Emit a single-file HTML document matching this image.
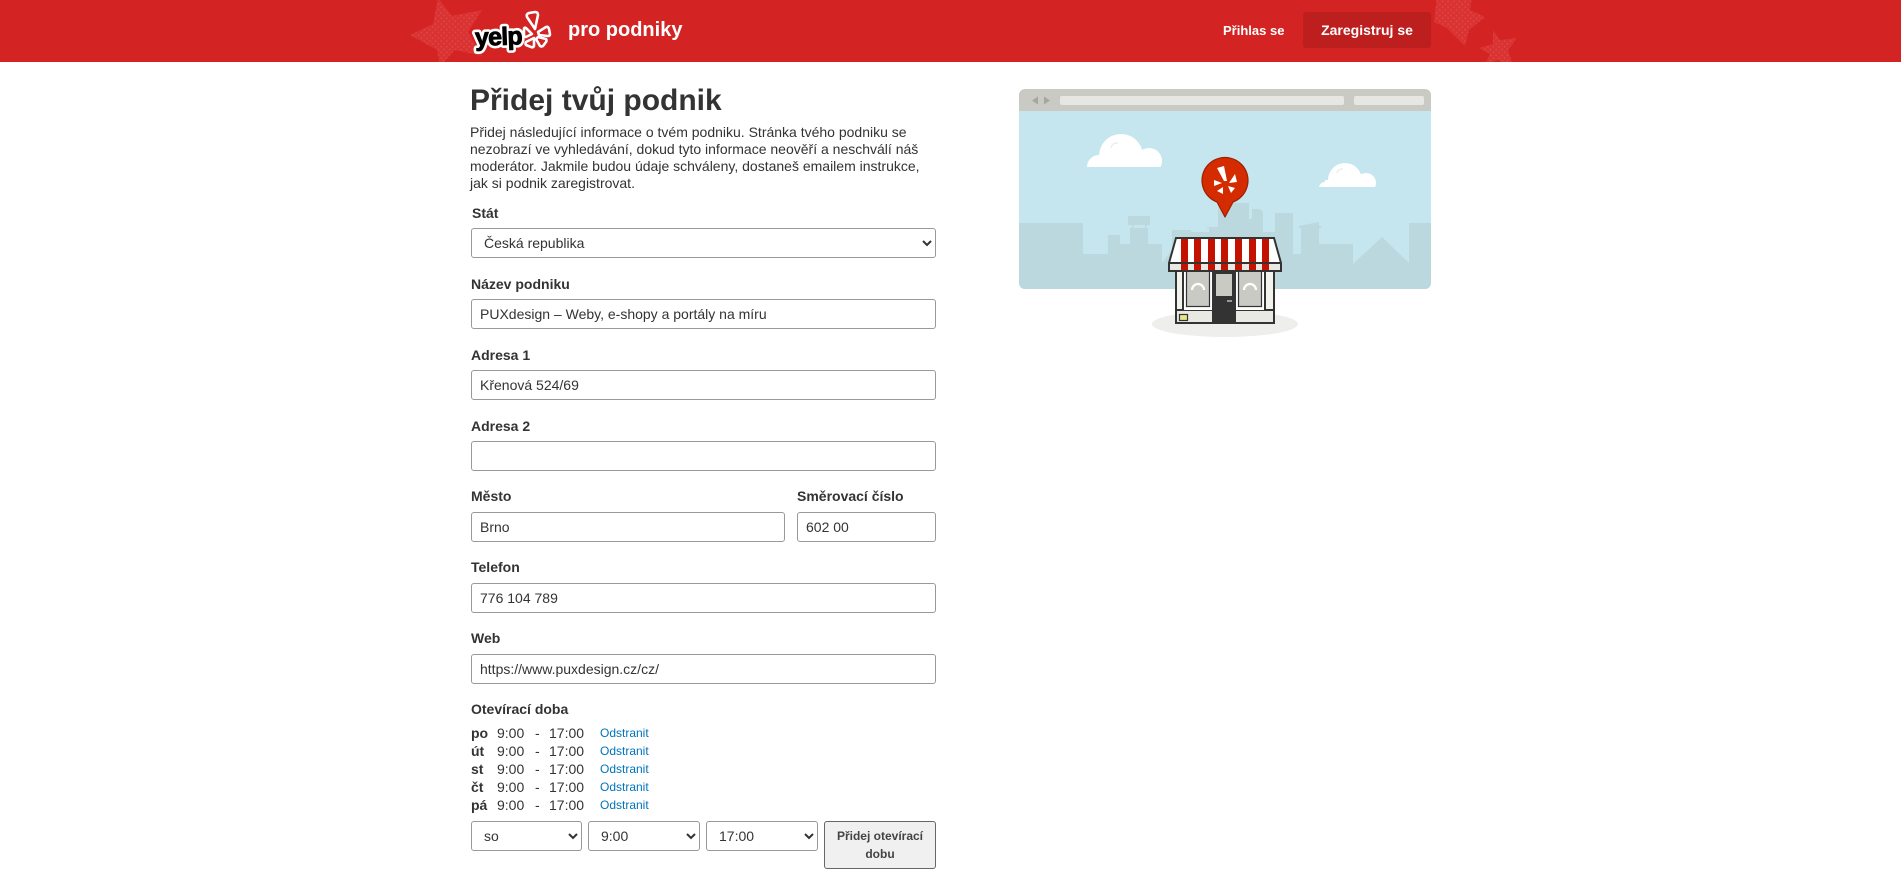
<!DOCTYPE html>
<html lang="cs">
<head>
<meta charset="utf-8">
<title>Přidej tvůj podnik</title>
<style>
html,body{margin:0;padding:0;background:#fff;width:1901px;height:871px;overflow:hidden}
body{font-family:"Liberation Sans",Arial,sans-serif;color:#333;font-size:14px;position:relative}
.abs{position:absolute}
.hdr{position:absolute;left:0;top:0;width:1901px;height:62px;background:#d32323;overflow:hidden}
label{position:absolute;left:471px;font-size:14px;line-height:18px;font-weight:bold;color:#333;white-space:nowrap}
input,select{position:absolute;box-sizing:border-box;height:30px;border:1px solid #999;border-radius:3px;background:#fff;font-family:"Liberation Sans",Arial,sans-serif;font-size:14px;color:#333;padding:0 8px;margin:0}
select{padding:0 8px}
.row{position:absolute;left:471px;height:18px;line-height:18px;font-size:14px;white-space:nowrap}
.row b{position:absolute;left:0;top:0}
.row span{position:absolute;top:0}
.row a{position:absolute;left:129px;top:0;font-size:12px;color:#0073bb;text-decoration:none}
button{position:absolute;box-sizing:border-box;left:824px;top:821px;width:112px;height:48px;background:#f0f0f0;border:1px solid #666;border-radius:3px;font-family:"Liberation Sans",Arial,sans-serif;font-size:12px;line-height:18px;font-weight:bold;color:#444;padding:0 4px;margin:0}
</style>
</head>
<body>
<div class="hdr">
<svg class="abs" style="left:0;top:0" width="1901" height="62" viewBox="0 0 1901 62">
<defs>
<pattern id="d" width="4" height="4" patternUnits="userSpaceOnUse" patternTransform="rotate(45)">
<rect width="4" height="4" fill="#d93232"/>
<rect width="2" height="2" fill="#e04040"/>
</pattern>
</defs>
<polygon points="438,-2 452,16 482,10 468,32 482,56 455,50 440,66 437,50 410,35 433,24" fill="url(#d)"/>
<polygon points="1437,-5 1434,22 1447,28 1465,46 1469,30 1485,17 1470,10 1472,-5" fill="url(#d)"/>
<polygon points="1493,30 1500,40 1517,38 1508,50 1513,66 1497,60 1484,66 1490,54 1479,48 1493,44" fill="url(#d)"/>
<text x="475" y="45" font-family="Liberation Sans,Arial,sans-serif" font-weight="bold" font-size="25" letter-spacing="-0.8" transform="rotate(-2 500 38)" fill="#000" stroke="#fff" stroke-width="6" stroke-linejoin="round" paint-order="stroke">yelp</text>
<text x="475" y="45" font-family="Liberation Sans,Arial,sans-serif" font-weight="bold" font-size="25" letter-spacing="-0.8" transform="rotate(-2 500 38)" fill="#000" stroke="#000" stroke-width="0.9" stroke-linejoin="round" aria-hidden="true">yelp</text>
<g fill="#d32323" stroke="#fff" stroke-width="2.600" stroke-linejoin="round">
<path d="M535,29 L527,17 Q526,14 529,13 L535,12 Q538,12 538,15 Z"/>
<path d="M538,32 L546,27 Q548,26 549,29 L550,34 Q550,36 548,36 L539,35 Z"/>
<path d="M538,37 L546,39 Q547,40 546,42 L543,46 Q541,47 540,46 L536,39 Z"/>
<path d="M534,38 L534,46 Q533,48 531,47 L526,45 Q525,44 526,42 Z"/>
<path d="M532,34 L526,37 Q524,37 524,35 L524,29 Q524,27 526,28 Z"/>
</g>
</svg>
<div class="abs" style="left:568px;top:18px;font-size:20px;line-height:24px;font-weight:bold;color:#fff;white-space:nowrap">pro podniky</div>
<div class="abs" style="left:1223px;top:22px;font-size:13px;line-height:18px;font-weight:bold;color:#fff;white-space:nowrap">Přihlas se</div>
<div class="abs" style="left:1303px;top:12px;width:128px;height:36px;background:#bd1f1f;border-radius:3px;text-align:center;font-size:14px;line-height:36px;font-weight:bold;color:#fff;white-space:nowrap">Zaregistruj se</div>
</div>

<div class="abs" style="left:470px;top:81px;font-size:30px;line-height:40px;font-weight:bold;color:#333;white-space:nowrap">Přidej tvůj podnik</div>
<div class="abs" style="left:470px;top:124px;width:470px;font-size:14px;line-height:17px;color:#333">Přidej následující informace o tvém podniku. Stránka tvého podniku se<br>nezobrazí ve vyhledávání, dokud tyto informace neověří a neschválí náš<br>moderátor. Jakmile budou údaje schváleny, dostaneš emailem instrukce,<br>jak si podnik zaregistrovat.</div>

<label style="top:204px;left:472px">Stát</label>
<select style="left:471px;top:228px;width:465px"><option>Česká republika</option></select>

<label style="top:275px">Název podniku</label>
<input style="left:471px;top:299px;width:465px" value="PUXdesign – Weby, e-shopy a portály na míru">

<label style="top:346px">Adresa 1</label>
<input style="left:471px;top:370px;width:465px" value="Křenová 524/69">

<label style="top:417px">Adresa 2</label>
<input style="left:471px;top:441px;width:465px" value="">

<label style="top:487px">Město</label>
<input style="left:471px;top:512px;width:314px" value="Brno">
<label style="top:487px;left:797px">Směrovací číslo</label>
<input style="left:797px;top:512px;width:139px" value="602 00">

<label style="top:558px">Telefon</label>
<input style="left:471px;top:583px;width:465px" value="776 104 789">

<label style="top:629px">Web</label>
<input style="left:471px;top:654px;width:465px" value="https://www.puxdesign.cz/cz/">

<label style="top:700px">Otevírací doba</label>

<div class="row" style="top:724px"><b>po</b><span style="left:26px">9:00</span><span style="left:64px">-</span><span style="left:78px">17:00</span><a href="#">Odstranit</a></div>
<div class="row" style="top:742px"><b>út</b><span style="left:26px">9:00</span><span style="left:64px">-</span><span style="left:78px">17:00</span><a href="#">Odstranit</a></div>
<div class="row" style="top:760px"><b>st</b><span style="left:26px">9:00</span><span style="left:64px">-</span><span style="left:78px">17:00</span><a href="#">Odstranit</a></div>
<div class="row" style="top:778px"><b>čt</b><span style="left:26px">9:00</span><span style="left:64px">-</span><span style="left:78px">17:00</span><a href="#">Odstranit</a></div>
<div class="row" style="top:796px"><b>pá</b><span style="left:26px">9:00</span><span style="left:64px">-</span><span style="left:78px">17:00</span><a href="#">Odstranit</a></div>

<select style="left:471px;top:821px;width:111px"><option>so</option></select>
<select style="left:588px;top:821px;width:112px"><option>9:00</option></select>
<select style="left:706px;top:821px;width:112px"><option>17:00</option></select>
<button>Přidej otevírací<br>dobu</button>

<svg class="abs" style="left:1010px;top:80px" width="430" height="270" viewBox="1010 80 430 270">
<defs>
<clipPath id="c1"><rect x="1080" y="125" width="90" height="42"/></clipPath>
<clipPath id="c2"><rect x="1315" y="155" width="65" height="32"/></clipPath>
</defs>
<path d="M1019,111 H1431 V283 a6,6 0 0 1 -6,6 H1025 a6,6 0 0 1 -6,-6 Z" fill="#c5e6ef"/>
<path d="M1019,95 a6,6 0 0 1 6,-6 H1425 a6,6 0 0 1 6,6 V111 H1019 Z" fill="#cacac4"/>
<rect x="1060" y="96" width="284" height="9" rx="2" fill="#e6e7e2"/>
<rect x="1354" y="96" width="70" height="9" rx="2" fill="#e6e7e2"/>
<polygon points="1032,100.500 1038,96.500 1038,104.500" fill="#a6a69f"/>
<polygon points="1050,100.500 1044,96.500 1044,104.500" fill="#a6a69f"/>
<g fill="#fff" clip-path="url(#c1)">
<circle cx="1121" cy="156" r="22"/><circle cx="1149" cy="161" r="13"/><circle cx="1099" cy="167" r="12"/><rect x="1099" y="156" width="50" height="11"/>
</g>
<path d="M1111,148 a6,6 0 0 1 7,-5" fill="none" stroke="#dfeff4" stroke-width="1.200"/>
<g fill="#fff" clip-path="url(#c2)">
<circle cx="1345" cy="180" r="17"/><circle cx="1366" cy="183" r="10"/><circle cx="1325" cy="188" r="6"/><rect x="1325" y="180" width="40" height="7"/>
</g>
<path d="M1337,173 a5,5 0 0 1 6,-4" fill="none" stroke="#dfeff4" stroke-width="1.200"/>
<path d="M1019,223 H1083 V254 H1108 V235 H1120 V244 H1130 V228 H1148 V244 H1162 V263 L1172,250 V230 H1191 V232 H1209 V228 H1207 V227 H1218 V203 H1249 V219 H1252 V209 H1258 Q1263,209 1263,214 V232 H1275 V213 H1293 V254 H1301 V228 H1299 V226 L1319,222 V226 H1321 V228 H1319 V244 H1353 V264 L1382,237 L1409,263 V223 H1431 V283 a6,6 0 0 1 -6,6 H1025 a6,6 0 0 1 -6,-6 Z" fill="#bad8de"/>
<rect x="1128" y="216" width="22" height="9" fill="#bad8de"/>
<rect x="1132" y="225" width="1.500" height="3" fill="#bad8de"/>
<rect x="1145" y="225" width="1.500" height="3" fill="#bad8de"/>
<path d="M1225,217 L1217,202 A23,23 0 1 1 1233,202 Z" fill="#d42b00" stroke="#9c2000" stroke-width="1.200" stroke-linejoin="round"/>
<g fill="#fff">
<path d="M1217,168 L1224,166 L1227,181 L1224,181 Z"/>
<path d="M1235,174 L1237,182 L1229,183 Z"/>
<path d="M1228,186 L1235,188 L1231,193 Z"/>
<path d="M1223,187 L1223,194 L1217,191 Z"/>
<path d="M1214,180 L1222,183 L1214,186 Z"/>
</g>
<ellipse cx="1225" cy="324" rx="73" ry="13" fill="#eeeeec"/>
<rect x="1176" y="270" width="98" height="53" fill="#f3f3ee" stroke="#333" stroke-width="2"/>
<rect x="1176" y="310" width="98" height="13" fill="#e9e9e4" stroke="#333" stroke-width="2"/>
<rect x="1184" y="271" width="28" height="39" fill="#fff"/>
<rect x="1236" y="271" width="28" height="39" fill="#fff"/>
<rect x="1182" y="271" width="2" height="39" fill="#333"/>
<rect x="1264" y="271" width="2" height="39" fill="#333"/>
<rect x="1186.500" y="271" width="23" height="35.500" fill="#cacac4" stroke="#333" stroke-width="1.200"/>
<rect x="1238.500" y="271" width="23" height="35.500" fill="#cacac4" stroke="#333" stroke-width="1.200"/>
<path d="M1192,290 a6,6 0 0 1 12,0" fill="none" stroke="#fff" stroke-width="2.200"/>
<path d="M1244,290 a6,6 0 0 1 12,0" fill="none" stroke="#fff" stroke-width="2.200"/>
<rect x="1212" y="271" width="24" height="53" fill="#333"/>
<rect x="1216" y="274" width="16" height="22" fill="#cacac4"/>
<rect x="1227" y="300" width="5" height="2" fill="#999"/>
<rect x="1179.500" y="314.500" width="8" height="6" fill="#e6e68a" stroke="#333" stroke-width="1.200"/>
<path d="M1176,238 H1274 L1281,263 H1169 Z" fill="#fff"/>
<rect x="1169" y="263" width="112" height="8" fill="#e9e9e4"/>
<g fill="#c41200">
<path d="M1181,238 H1188 V271 H1181 Z"/><path d="M1194,238 H1201 V271 H1194 Z"/><path d="M1208,238 H1215 V271 H1208 Z"/><path d="M1221,238 H1228 V271 H1221 Z"/><path d="M1235,238 H1242 V271 H1235 Z"/><path d="M1249,238 H1256 V271 H1249 Z"/><path d="M1262,238 H1269 V271 H1262 Z"/>
</g>
<path d="M1176,238 H1274 L1281,263 V271 H1169 V263 Z" fill="none" stroke="#333" stroke-width="2"/>
<path d="M1169,263 H1281" stroke="#333" stroke-width="2"/>
</svg>
</body>
</html>
